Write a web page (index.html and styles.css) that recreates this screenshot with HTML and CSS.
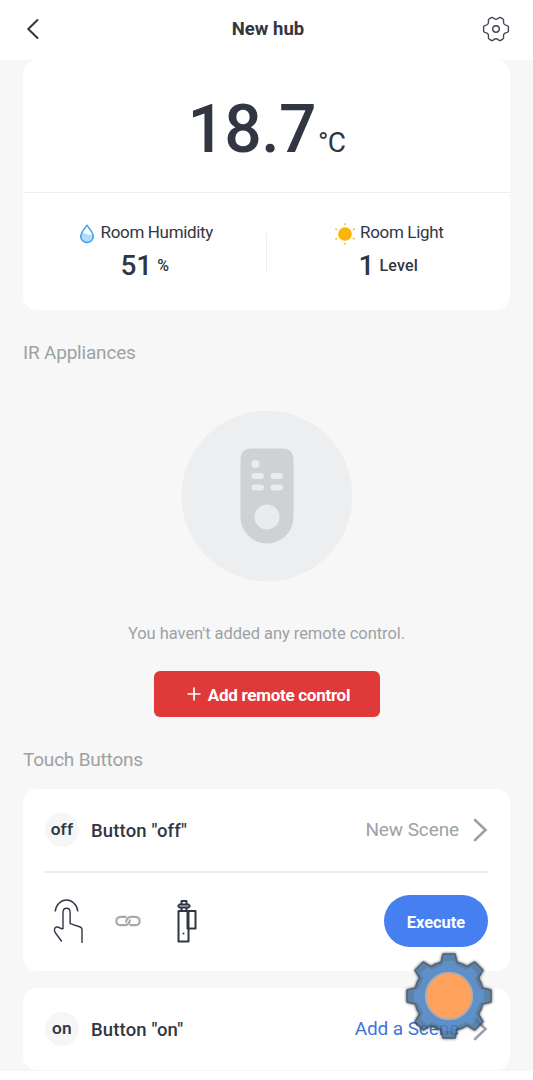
FILE: index.html
```html
<!DOCTYPE html>
<html lang="en">
<head>
<meta charset="utf-8">
<title>New hub</title>
<link rel="stylesheet" href="styles.css">
</head>
<body>
<div class="app">
  <header class="topbar">
    <svg class="back" width="14" height="22" viewBox="0 0 14 22"><path d="M12.500 2 3.300 11l9.200 9"/></svg>
    <h1 class="title">New hub</h1>
    <svg class="settings" width="28" height="28" viewBox="-14 -14 28 28"><path d="M-4.800-11.300Q-3.500-12-2.600-11 0-8.600 2.600-11 3.500-12 4.800-11.300L6.700-10.200Q8-9.500 7.600-8 6.900-4.700 10.200-3.700L11.200-3.400Q12.400-3 12.400-1.800V1.800Q12.400 3 11.200 3.400L10.200 3.700Q6.900 4.700 7.600 8 8 9.500 6.700 10.200L4.800 11.300Q3.500 12 2.600 11 0 8.600-2.600 11-3.500 12-4.800 11.300L-6.700 10.200Q-8 9.500-7.600 8-6.900 4.700-10.200 3.700L-11.200 3.400Q-12.400 3-12.400 1.800V-1.800Q-12.400-3-11.200-3.400L-10.200-3.700Q-6.900-4.700-7.600-8-8-9.500-6.700-10.200Z"/><circle r="3.300"/></svg>
  </header>
  <main class="content">
    <section class="card climate">
      <div class="temperature"><span class="degrees">18.7</span><span class="unit">°C</span></div>
      <div class="sensors">
        <div class="sensor">
          <div class="sensor-name">
            <svg class="drop" width="16" height="20" viewBox="0 0 16 20"><path d="M8 1.400C5.800 4.400 1.800 8.300 1.800 12.400a6.200 6.200 0 0 0 12.400 0C14.200 8.300 10.200 4.400 8 1.400Z" fill="#fff"/><path d="M2 11C2.400 8.200 4.200 7.800 6 9.200S10.500 11 13.900 10.500V13A6 6 0 0 1 2 13Z" fill="#b0dcfd"/><path d="M8 1.400C5.800 4.400 1.800 8.300 1.800 12.400a6.200 6.200 0 0 0 12.400 0C14.200 8.300 10.200 4.400 8 1.400Z" fill="none" stroke="#329ff4" stroke-width="1.500"/></svg>
            <span class="humidity-label">Room Humidity</span>
          </div>
          <div class="reading"><b class="value">51</b><span class="suffix percent">%</span></div>
        </div>
        <div class="sensor">
          <div class="sensor-name">
            <svg class="sun" width="22" height="22" viewBox="-11 -11 22 22"><circle r="6.200"/><path d="M0-10.800V-8.800M0 8.800V10.800M-9.600-5.400-7.800-4.300M9.600-5.400 7.800-4.300M-9.600 5.400-7.800 4.300M9.600 5.400 7.800 4.300"/></svg>
            <span class="light-label">Room Light</span>
          </div>
          <div class="reading"><b class="value">1</b><span class="suffix level">Level</span></div>
        </div>
      </div>
    </section>

    <h2 class="section-title ir-title">IR Appliances</h2>
    <section class="empty">
      <svg class="remote" width="172" height="172" viewBox="0 0 172 172"><circle cx="86" cy="86" r="85.300" fill="#eceeef"/><path d="M71 38.500H101Q112.500 38.500 112.500 50V107A26.500 26.500 0 0 1 59.500 107V50Q59.500 38.500 71 38.500Z" fill="#ced2d4"/><g fill="#e9ebec"><circle cx="74.500" cy="54" r="4"/><rect x="70.500" y="63" width="12.500" height="6" rx="3"/><rect x="89.500" y="63" width="12.500" height="6" rx="3"/><rect x="70.500" y="74.500" width="12.500" height="6" rx="3"/><rect x="89.500" y="74.500" width="12.500" height="6" rx="3"/><circle cx="86" cy="107" r="12.500"/></g></svg>
      <p class="hint">You haven't added any remote control.</p>
      <button class="add"><svg width="14" height="14" viewBox="0 0 14 14"><path d="M7 .5V13.500M.5 7H13.500"/></svg><span class="add-label">Add remote control</span></button>
    </section>

    <h2 class="section-title touch-title">Touch Buttons</h2>
    <section class="card touch">
      <div class="touch-head">
        <span class="badge">off</span>
        <span class="name">Button "off"</span>
        <span class="scene">New Scene</span>
        <svg class="chevron" width="14" height="24" viewBox="0 0 14 24"><path d="M1 2 11.500 12 1 22"/></svg>
      </div>
      <div class="touch-body">
        <svg class="hand" width="32" height="46" viewBox="0 0 32 46"><path d="M2.200 13.500C2.700 6.600 8 2 13.500 2S24.300 6.600 24.800 13.500"/><path d="M8.800 43.500 2.500 35C.5 32.300 1.300 28.900 4.300 29 6.500 29.200 8 31.500 10 30.600V14Q10.200 10.300 13.500 10.300T17.100 14V25.600L27.300 29Q29 29.700 29 31.500V45"/></svg>
        <svg class="link" width="26" height="12" viewBox="0 0 26 12"><path d="M11.500 1.800H5.500A4.200 4.200 0 0 0 5.500 10.200H10C12.500 10.200 15.300 7.500 14.800 4.500M14.500 10.200H20.500A4.200 4.200 0 0 0 20.500 1.800H16C13.500 1.800 10.700 4.500 11.200 7.500"/></svg>
        <svg class="bot" width="22" height="44" viewBox="0 0 22 44"><path d="M2.500 12H12.500V42.500H2.500ZM12.500 12H19.500V29.500H11.500V12M5.500 12V2H10.500V12"/><path class="bot-cap" d="M3.500 5.200H12.500L14 7 12.500 8.800H3.500L2 7Z"/><circle cx="7.500" cy="34.500" r="1"/></svg>
        <button class="execute">Execute</button>
      </div>
    </section>

    <section class="card touch">
      <div class="touch-head">
        <span class="badge">on</span>
        <span class="name">Button "on"</span>
        <span class="scene add-scene">Add a Scene</span>
        <svg class="chevron" width="14" height="24" viewBox="0 0 14 24"><path d="M1 2 11.500 12 1 22"/></svg>
      </div>
    </section>
  </main>
  <svg class="floating-gear" width="92" height="92" viewBox="-46 -46 92 92">
    <g class="gear-body">
      <path class="gear-edge" d="M-8-33.500-6-42H6L8-33.500Q13.500-32.500 18-29.300L25.800-34 34-25.800 29.300-18Q32.500-13.500 33.500-8L42-6V6L33.500 8Q32.500 13.500 29.300 18L34 25.800 25.800 34 18 29.300Q13.500 32.500 8 33.500L6 42H-6L-8 33.500Q-13.500 32.500-18 29.300L-25.800 34-34 25.800-29.300 18Q-32.500 13.500-33.500 8L-42 6V-6L-33.500-8Q-32.500-13.500-29.300-18L-34-25.800-25.800-34-18-29.300Q-13.500-32.500-8-33.500Z"/>
      <path class="gear-face" d="M-7.500-30.500-5.500-35H5.500L7.500-30.500Q12-29 17-26L22.500-28.500 28.500-22.500 26-17Q29-12 30.500-7.500L35-5.500V5.500L30.500 7.500Q29 12 26 17L28.500 22.500 22.500 28.500 17 26Q12 29 7.500 30.500L5.500 35H-5.500L-7.500 30.500Q-12 29-17 26L-22.500 28.500-28.500 22.500-26 17Q-29 12-30.500 7.500L-35 5.500V-5.500L-30.500-7.500Q-29-12-26-17L-28.500-22.500-22.500-28.500-17-26Q-12-29-7.500-30.500Z"/>
    </g>
    <circle class="gear-hub" r="23.300"/>
  </svg>
</div>
</body>
</html>
```
FILE: styles.css
```css
* { box-sizing: border-box; }
body {
  margin: 0;
  background: #fff;
  color: #323643;
  font-family: Roboto, "Liberation Sans", sans-serif;
}
h1, h2, p { margin: 0; }
button { border: 0; font-family: inherit; color: #fff; }
svg { display: block; flex: none; overflow: visible; }
.app { position: relative; height: 1080px; overflow: hidden; }

.topbar {
  height: 60px;
  padding: 0 23px 2px 25px;
  display: flex;
  align-items: center;
  justify-content: space-between;
}
.back { fill: none; stroke: #323643; stroke-width: 2; stroke-linecap: round; }
.title { font-size: 18.500px; font-weight: 700; padding-left: 15px; }
.settings { fill: none; stroke: #444753; stroke-width: 1.400; }

.content { height: 1011px; padding: 0 23px; background: #f7f7f7; }
.card { background: #fff; border-radius: 14px; }

.climate { height: 250px; }
.temperature {
  height: 133px;
  border-bottom: 1px solid #eee;
  display: flex;
  justify-content: center;
  align-items: baseline;
  line-height: 139px;
}
.degrees { font-size: 66px; font-weight: 500; letter-spacing: -0.6px; }
.unit { font-size: 28px; margin-left: 2px; letter-spacing: -0.500px; }
.sensors { display: flex; padding-top: 29px; }
.sensor { flex: 1; height: 52px; }
.sensor-name { height: 20px; display: flex; justify-content: center; align-items: center; font-size: 17px; letter-spacing: -0.350px; }
.sensor + .sensor { position: relative; }
.sensor + .sensor::before { content: ""; position: absolute; left: -1px; top: 11px; width: 1px; height: 40px; background: #eee; }
.drop { margin: 4px 6px 0 2px; }
.sun { margin: 4px 4px 0 1px; fill: #f9b508; stroke: #f9b508; stroke-width: 1.300; }
.reading { display: flex; justify-content: center; align-items: center; height: 46px; }
.value { font-size: 28px; font-weight: 500; margin-right: 5px; }
.suffix { font-size: 16px; font-weight: 500; }
.suffix.level { letter-spacing: 0.2px; }

.section-title { font-size: 19px; font-weight: 400; line-height: 24px; color: #9da2a4; letter-spacing: -0.200px; }
.ir-title { margin-top: 31px; }
.empty { display: flex; flex-direction: column; align-items: center; padding-top: 45px; }
.hint { margin-top: 40px; font-size: 16.500px; line-height: 24px; color: #9da2a4; letter-spacing: -0.050px; }
.add {
  width: 226px; height: 46px; margin-top: 25px; padding: 2px 0 0 4px;
  display: flex; align-items: center; justify-content: center; gap: 7px;
  border-radius: 6px; background: #df3939; font-size: 17px; font-weight: 700;
  letter-spacing: -0.280px;
}
.add svg { margin-bottom: 2px; fill: none; stroke: #fff; stroke-width: 1.700; }

.touch-title { margin-top: 31px; }
.touch { height: 182px; margin-top: 17px; padding: 0 22px; }
.touch + .touch { height: 82px; margin-top: 17px; }
.touch-head { height: 84px; padding-bottom: 1px; display: flex; align-items: center; border-bottom: 2px solid #eaebec; }
.touch + .touch .touch-head { border-color: transparent; }
.badge {
  width: 34px; height: 34px; border-radius: 50%; background: #f6f6f6;
  display: flex; align-items: center; justify-content: center;
  font-family: Lato, sans-serif; font-size: 17px; font-weight: 700; padding-bottom: 3px;
  font-variant-ligatures: none; letter-spacing: 0.300px;
}
.name { margin-left: 12px; padding-top: 2px; font-size: 18.500px; font-weight: 500; flex: 1; letter-spacing: 0.150px; }
.scene { font-size: 19px; color: #9da2a4; letter-spacing: -0.100px; }
.add-scene { color: #3d75dc; }
.chevron { margin-left: 15px; fill: none; stroke: #9da0a7; stroke-width: 2.600; stroke-linecap: round; }
.touch-body { height: 98px; display: flex; align-items: center; padding: 0 0 2px 8px; }
.hand { fill: none; stroke: #323643; stroke-width: 1.400; }
.link { margin-left: 30px; fill: none; stroke: #a5a9ac; stroke-width: 2.200; }
.bot { margin-left: 35px; fill: none; stroke: #323643; stroke-width: 2; stroke-linejoin: round; }
.bot-cap { fill: #858892; stroke-width: 1.600; }
.bot circle { fill: #323643; stroke: none; }
.execute { width: 104px; height: 52px; margin-left: auto; padding: 2px 0 0; border-radius: 26px; background: #467fef; font-size: 16.400px; font-weight: 700; }

.floating-gear { position: absolute; left: 403px; top: 950px; }
.gear-body { opacity: .87; filter: drop-shadow(0 0 1.500px #30384a); }
.gear-edge { fill: #42719a; stroke: #3c4c63; stroke-width: 1.500; stroke-linejoin: round; }
.gear-face { fill: #4a7fbf; }
.gear-hub { fill: #fea25e; stroke: #a7adb2; stroke-width: 1.800; }
```
